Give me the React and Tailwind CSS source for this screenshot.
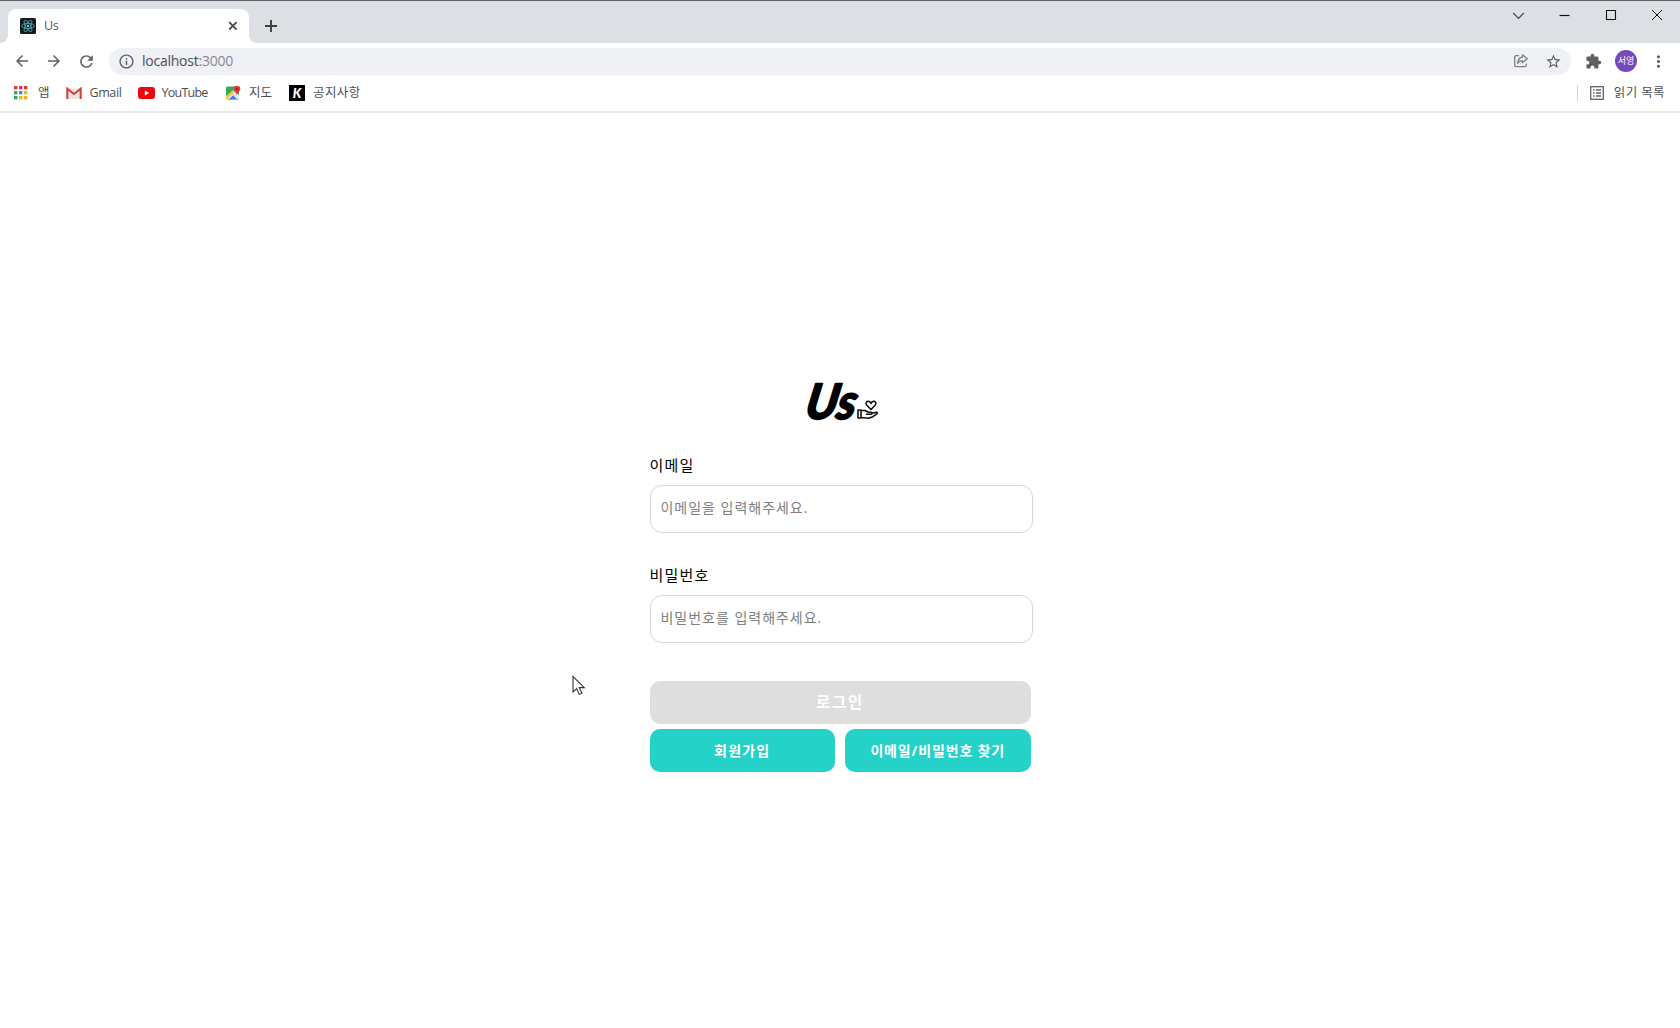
import React from "react";
import { MdArrowBack, MdArrowForward, MdRefresh, MdInfoOutline, MdStarBorder, MdExtension, MdMoreVert } from "react-icons/md";

function ReactIcon() {
  return (
    <svg className="h-4 w-4 shrink-0" viewBox="0 0 16 16">
      <rect width="16" height="16" rx="1.5" fill="#17191d" />
      <g fill="none" stroke="#4fb6cc" strokeWidth="0.75">
        <ellipse cx="8" cy="8" rx="6.4" ry="2.5" />
        <ellipse cx="8" cy="8" rx="6.4" ry="2.5" transform="rotate(60 8 8)" />
        <ellipse cx="8" cy="8" rx="6.4" ry="2.5" transform="rotate(120 8 8)" />
      </g>
      <circle cx="8" cy="8" r="1.2" fill="#5fd0e8" />
    </svg>
  );
}

function AppsIcon() {
  const colors = ["#e0393a", "#e0393a", "#e0393a", "#34a853", "#4285f4", "#f2b51d", "#34a853", "#f2b51d", "#f2b51d"];
  return (
    <svg className="h-[14px] w-[14px] shrink-0" viewBox="0 0 14 14">
      {colors.map((c, i) => (
        <rect key={i} x={(i % 3) * 5} y={Math.floor(i / 3) * 5} width="3.4" height="3.4" fill={c} />
      ))}
    </svg>
  );
}

function GmailIcon() {
  return (
    <svg className="h-3 w-4 shrink-0" viewBox="0 0 16 12">
      <path d="M1.5 1.5h13V12h-13z" fill="#ece6e6" />
      <path d="M1.3 12V1.7L8 7l6.7-5.3V12" fill="none" stroke="#d8423c" strokeWidth="2.1" />
    </svg>
  );
}

function YouTubeIcon() {
  return (
    <svg className="h-3 w-[17px] shrink-0" viewBox="0 0 17 12">
      <rect width="17" height="12" rx="3" fill="#f0050f" />
      <path d="M6.8 3.5v5L11.2 6z" fill="#fff" />
    </svg>
  );
}

function MapsIcon() {
  return (
    <svg className="h-4 w-4 shrink-0" viewBox="0 0 16 16">
      <rect x="1" y="1.5" width="13" height="13" rx="1.5" fill="#35a65b" />
      <path d="M1 13 9.5 5.5 14 10v3a1.5 1.5 0 0 1-1.5 1.5h-10z" fill="#e9e9e4" />
      <path d="M1 11 8 5l2 1.5-8.5 8H1z" fill="#f5c83a" />
      <path d="M3.5 14.5 8 10.2l4.5 4.3z" fill="#4285f4" />
      <path d="M12 .8a3.3 3.3 0 0 0-3.3 3.3c0 2.4 2.5 3 3.3 6 .8-3 3.3-3.6 3.3-6A3.3 3.3 0 0 0 12 .8z" fill="#df3b36" />
      <circle cx="12" cy="4" r="1.1" fill="#8e1f1f" />
    </svg>
  );
}

function Bookmark({ icon, text, width }) {
  return (
    <div className={"flex h-full items-center " + width}>
      {icon}
      {text}
    </div>
  );
}

function TitleBar() {
  return (
    <div className="flex h-[43px] border-t border-[#5f6066] bg-[#dcdfe4] text-[#3c4043]">
      <div className="w-2 bg-white">
        <div className="h-[42px] w-2 rounded-br-lg bg-[#dcdfe4]" />
      </div>
      <div className="mt-2 flex w-[241px] items-center rounded-t-lg bg-white pl-3 pr-[10px]">
        <ReactIcon />
        <span className="ml-2 flex-1 text-[12.5px] tracking-[-0.4px] text-[#55585c]">Us</span>
        <svg className="h-3 w-3" viewBox="0 0 12 12"><path d="m2.2 2.2 7.4 7.4m0-7.4-7.4 7.4" stroke="#45484c" strokeWidth="1.8" /></svg>
      </div>
      <div className="w-2 bg-white">
        <div className="h-[42px] w-2 rounded-bl-lg bg-[#dcdfe4]" />
      </div>
      <div className="flex h-full flex-1 items-start justify-between">
        <svg className="ml-[7px] mt-[18px] h-[14px] w-[14px]" viewBox="0 0 14 14"><path d="M7 1v12M1 7h12" stroke="#3c4043" strokeWidth="1.9" /></svg>
        <svg className="mr-[17px] mt-2 h-3 w-[152px]" viewBox="0 0 152 12" fill="none" stroke="#111" strokeWidth="1">
          <path d="m2.2 4 5.3 5.3L12.8 4" stroke="#44474b" strokeWidth="1.2" />
          <path d="M48.5 6.5h10" strokeWidth="1.2" />
          <path d="M95.5 1.5h9v9h-9z" strokeWidth="1.1" />
          <path d="m141 1 10 10m0-10-10 10" />
        </svg>
      </div>
    </div>
  );
}

function ShareIcon() {
  return (
    <svg className="h-4 w-4" viewBox="0 0 16 16" fill="none" stroke="#7b7e82" strokeWidth="1.3" strokeLinejoin="round">
      <path d="M6 2.7H3.2Q1.7 2.7 1.7 4.2v8Q1.7 13.7 3.2 13.7h8.6q1.5 0 1.5-1.5V10.5" />
      <path d="M9.5 1.8 14.3 5.8 9.5 9.6V7.6C7.2 7.6 5.7 8.5 4.6 10.4 4.9 6.8 6.5 4.4 9.5 4z" />
    </svg>
  );
}

function ToolBar() {
  return (
    <div className="flex h-8 items-center pt-[4px] text-[#5c6064]">
      <div className="flex w-[109px] items-center gap-[14px] pl-[13px]">
        <MdArrowBack size={18} />
        <MdArrowForward size={18} />
        <MdRefresh size={19} />
      </div>
      <div className="flex h-[27px] w-[1462px] items-center rounded-full bg-[#eff1f4] pl-[9px] pr-[9px]">
        <MdInfoOutline size={17} />
        <span className="-mt-px ml-[7px] flex-1 text-[14px] tracking-[-0.24px] text-[#85888c]"><span className="text-[#4a4e55]">localhost</span>:3000</span>
        <ShareIcon />
        <MdStarBorder size={17} className="ml-4" />
      </div>
      <MdExtension size={17} className="ml-[14px]" />
      <div className="ml-[13px] flex h-[22px] w-[22px] items-center justify-center rounded-full bg-[#7a48bd] text-[9px] tracking-[-0.1px] text-white">서영</div>
      <MdMoreVert size={19} className="ml-3" />
    </div>
  );
}

function BookmarksBar() {
  return (
    <div className="flex h-[38px] items-center border-b-2 border-[#e8e9ea] pl-[14px] pr-[15px] text-[12.5px] text-[#4c5056]">
      <Bookmark width="w-[51.5px] gap-[10px]" icon={<AppsIcon />} text="앱" />
      <Bookmark width="w-[72px] gap-2" icon={<GmailIcon />} text={<span className="tracking-[-0.4px]">Gmail</span>} />
      <Bookmark width="w-[87.5px] gap-[7px]" icon={<YouTubeIcon />} text={<span className="tracking-[-0.75px]">YouTube</span>} />
      <Bookmark width="w-[64px] gap-2" icon={<MapsIcon />} text="지도" />
      <Bookmark
        width="flex-1 gap-2"
        icon={<div className="flex h-4 w-4 items-center justify-center bg-black font-['Lato'] text-[13px] font-black italic leading-none text-white">K</div>}
        text={<span className="tracking-[0.4px]">공지사항</span>}
      />
      <div className="mr-3 h-4 w-px bg-[#d2d4d7]" />
      <svg className="mr-[10px] h-[14px] w-[14px]" viewBox="0 0 14 14" fill="none" stroke="#606368" strokeWidth="1.3">
        <rect x=".7" y=".7" width="12.6" height="12.6" />
        <path d="M3 4h1.5M3 7h1.5M3 10h1.5M6 4h5M6 7h5M6 10h5" />
      </svg>
      <span className="tracking-[0.4px]">읽기 목록</span>
    </div>
  );
}

function Logo() {
  return (
    <div className="flex h-12 items-end justify-center pl-[3px] text-black">
      <svg className="h-12 w-[80px] overflow-visible" viewBox="0 0 80 48">
        <text transform="translate(1.5 41) skewX(-11) scale(.95 1)" fontFamily="Lato" fontWeight="900" fontStyle="italic" fontSize="49" stroke="#000" strokeWidth="1.6" strokeLinejoin="round">Us</text>
        <g transform="translate(55 21)" fill="none" stroke="#111" strokeWidth="1.6" strokeLinejoin="round" strokeLinecap="round">
          <path d="M14 10.5 9.9 6.3C8.500 4.600 9.300 2.500 11 2.300 12.600 2.100 13.500 3.400 14 4.300 14.500 3.400 15.400 2.100 17 2.300 18.700 2.500 19.500 4.600 18.100 6.300z" />
          <path d="M1 11h3v8H1zM4 11.500h4l3.500 1.700h2.800c1.200 0 1.200 2 0 2H9.500M14.800 14.300l4.500-1c1.300-.1 1.300 1 .4 1.600L16 17.700l-4.500 1.600L4 18.500" />
        </g>
      </svg>
    </div>
  );
}

function Field({ label, placeholder, type }) {
  return (
    <label className="block h-[110px]">
      <span className="flex h-[30px] items-start text-[15px] leading-5 tracking-[1.2px] text-black">{label}</span>
      <input
        type={type}
        placeholder={placeholder}
        className="block h-12 w-[383px] rounded-xl border border-[#d6d6d6] bg-white px-[10px] pb-[3px] text-[14px] tracking-[0.98px] outline-none placeholder:text-[#808080]"
      />
    </label>
  );
}

function LoginForm() {
  return (
    <form className="mx-auto w-[381px] pt-[265px]">
      <Logo />
      <div className="pt-[29px]">
        <Field label="이메일" placeholder="이메일을 입력해주세요." type="email" />
        <Field label="비밀번호" placeholder="비밀번호를 입력해주세요." type="password" />
      </div>
      <button type="button" className="mt-[6px] block h-[43px] w-full rounded-[10px] bg-[#dedede] text-[15.5px] font-bold tracking-[1.8px] text-white">로그인</button>
      <div className="mt-[5px] grid grid-cols-2 gap-[10px]">
        <button type="button" className="h-[43px] rounded-[10px] bg-[#25d2c7] text-[14px] font-bold tracking-[1.2px] text-white">회원가입</button>
        <button type="button" className="h-[43px] rounded-[10px] bg-[#25d2c7] text-[14px] font-bold tracking-[0.85px] text-white">이메일/비밀번호 찾기</button>
      </div>
    </form>
  );
}

export default function App() {
  return (
    <div className="relative h-[1028px] w-[1680px] overflow-hidden bg-white font-['Open_Sans','Noto_Sans_CJK_KR',sans-serif]">
      <TitleBar />
      <ToolBar />
      <BookmarksBar />
      <LoginForm />
      <svg className="absolute left-[572px] top-[675px] h-[22px] w-[15px]" viewBox="0 0 15 22">
        <path d="M1 1.5v15.5l3.7-3.4 2.5 5.8 2.7-1.1-2.5-5.7h4.9z" fill="#fff" stroke="#333" strokeWidth="1.1" />
      </svg>
    </div>
  );
}
